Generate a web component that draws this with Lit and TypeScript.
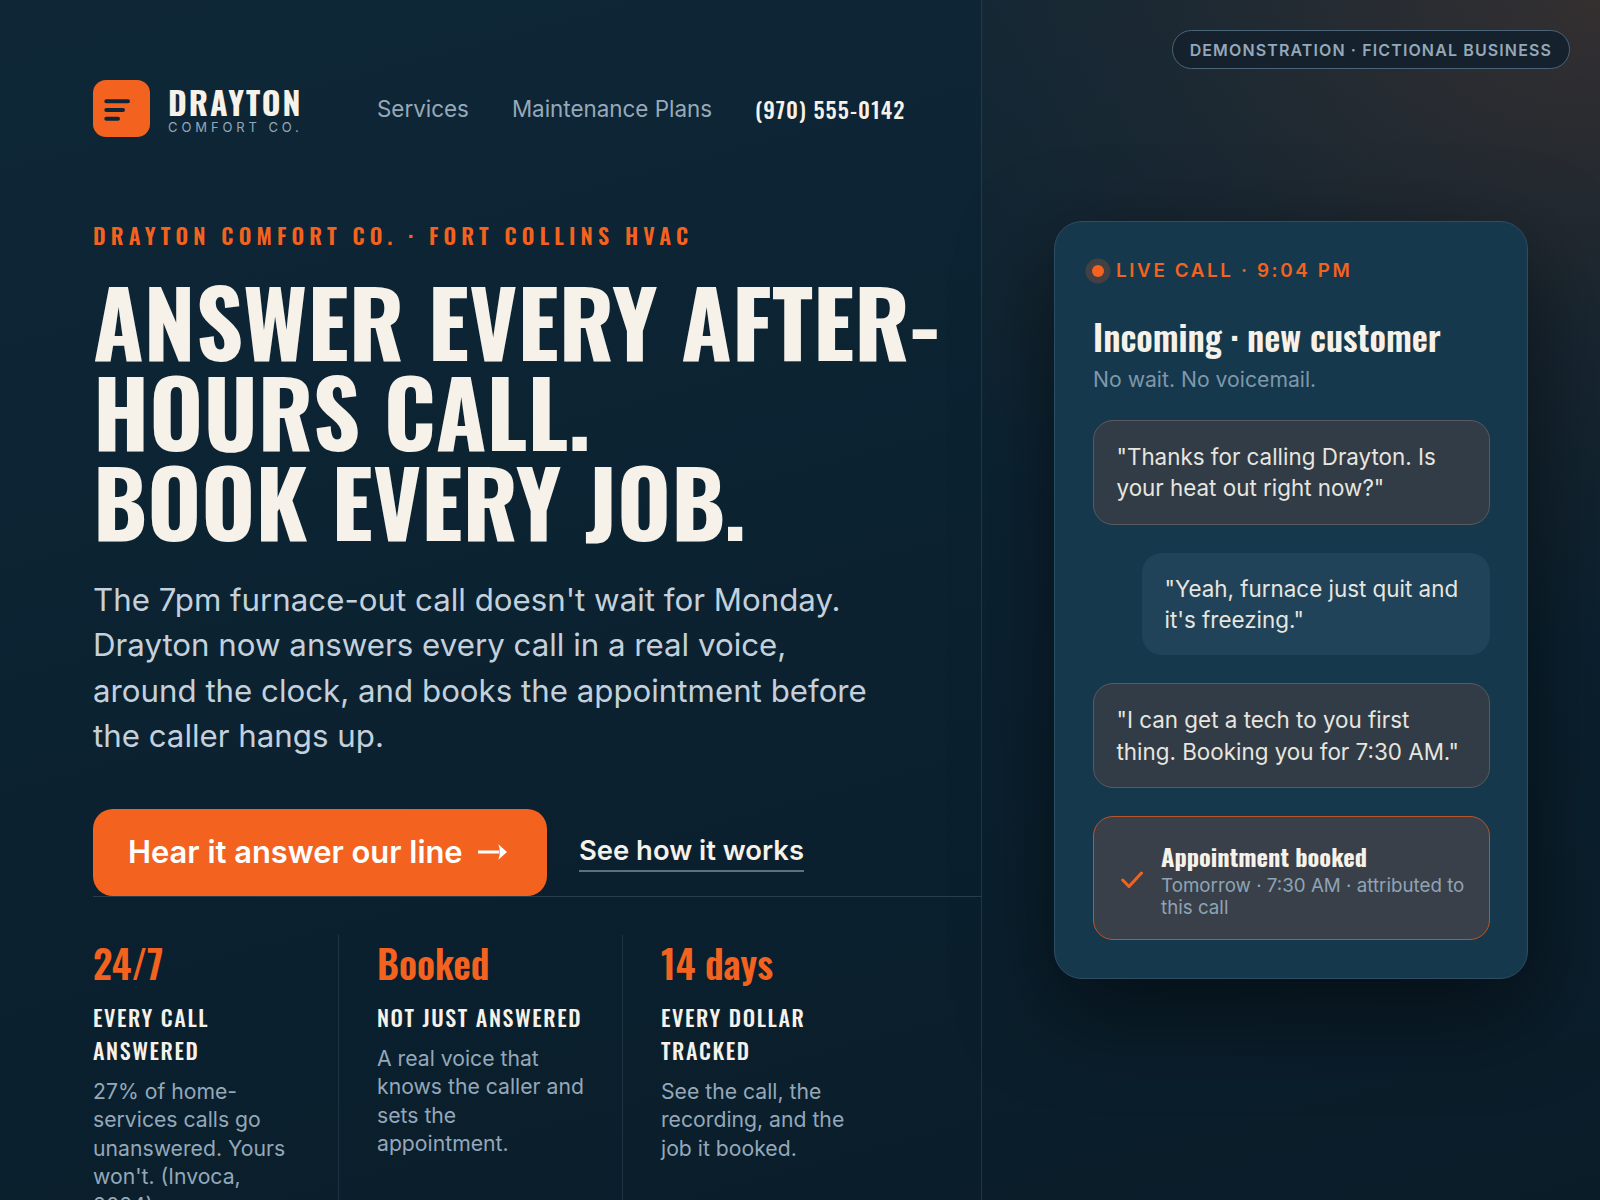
import { LitElement, html, css } from "lit";
import { customElement } from "lit/decorators.js";

const DISPLAY = css`Oswald, "Liberation Sans Narrow", "Liberation Sans", sans-serif`;
const BODY = css`Inter, "Liberation Sans", sans-serif`;

@customElement("app-root")
export class AppRoot extends LitElement {
  static styles = css`
    :host {
      display: block;
      height: 1200px;
      overflow: hidden;
      font-family: ${BODY};
      color: #f6f1e9;
      background: #0c2130;
    }
    * { box-sizing: border-box; }
    .page {
      position: relative;
      display: grid;
      grid-template-columns: 982px 618px;
      height: 1200px;
      overflow: hidden;
      background: linear-gradient(165deg, #0e2737 0%, #0b2130 55%, #0a1c28 100%);
    }
    .left {
      border-right: 1px solid rgba(150, 175, 195, 0.16);
      padding: 80px 0 0 93px;
      display: flex;
      flex-direction: column;
      min-width: 0;
    }
    header { display: flex; align-items: center; height: 58px; }
    .mark {
      width: 57px; height: 57px; border-radius: 13px; align-self: flex-start;
      background: #f3631f; margin-right: 18px; flex: none; display: block;
    }
    .brand { display: flex; flex-direction: column; width: 133px; margin: -1px 76px 0 0; }
    .brand b {
      font: 700 32px/36px ${DISPLAY};
      letter-spacing: 0.062em; color: #f6f1e9; white-space: nowrap;
    }
    .brand small {
      font: 400 13px/14px ${BODY};
      letter-spacing: 0.3em; color: #94a8ba; white-space: nowrap;
    }
    nav { display: flex; align-items: center; gap: 43px; white-space: nowrap; }
    nav a { font: 400 22.4px/1.2 ${BODY}; color: #97a9b9; }
    nav a.tel { font: 500 22.4px/1.2 ${DISPLAY}; color: #f6f1e9; letter-spacing: 0.05em; }
    .eyebrow {
      margin-top: 83px;
      font: 600 22px/28px ${DISPLAY};
      letter-spacing: 0.235em; color: #f3631f; white-space: nowrap;
    }
    h1 {
      margin: 26px 0 0;
      font: 700 92.3px/90px ${DISPLAY};
      color: #f6f1e9; text-transform: uppercase;
    }
    .lede {
      margin: 33px 0 0; width: 790px;
      font: 400 31.25px/45.4px ${BODY}; color: #c4d0db;
    }
    .cta { display: flex; align-items: center; gap: 32px; margin-top: 49px; }
    .btn {
      display: flex; align-items: center; gap: 15px;
      height: 87px; width: 454px; padding: 0 35px;
      background: #f3631f; border-radius: 20px;
      font: 600 30.9px/1 ${BODY}; color: #fff; white-space: nowrap;
    }
    .link {
      font: 600 27.4px/33px ${BODY}; color: #f6f1e9; margin-top: 2px;
      border-bottom: 2px solid #5a7185; padding-bottom: 3.5px;
    }
    .stats {
      display: grid; grid-template-columns: 245px 284px 284px;
      border-top: 1px solid rgba(150, 175, 195, 0.22);
      padding-top: 38px;
      flex: 1;
    }
    .stat { padding-right: 30px; }
    .stat:first-child { padding-right: 39px; }
    .stat + .stat { border-left: 1px solid rgba(150, 175, 195, 0.14); padding-left: 38px; }
    .stat .v { font: 600 38.2px/56px ${DISPLAY}; color: #f3631f; }
    .stat .l {
      margin-top: 10px;
      font: 500 22px/33px ${DISPLAY}; letter-spacing: 0.073em; color: #f6f1e9; text-transform: uppercase;
    }
    .stat p { margin: 10px 0 0; font: 400 21.2px/28.6px ${BODY}; color: #94a8ba; }
    .right {
      position: relative; padding: 221px 72px 0 72px;
      background: radial-gradient(900px 650px at 100% 0%, rgba(246, 102, 31, 0.17), rgba(246, 102, 31, 0.06) 50%, rgba(246, 102, 31, 0.03) 70%, transparent 100%);
    }
    .badge {
      position: absolute; top: 30px; right: 30px;
      height: 39px; padding: 0 17px; border-radius: 20px;
      display: flex; align-items: center;
      background: #15212c; border: 1px solid #4b6478;
      font: 600 16px/1 ${BODY}; letter-spacing: 0.07em; color: #94a8ba; white-space: nowrap;
    }
    .card {
      width: 474px; border-radius: 28px;
      background: #16384c; border: 1px solid #2c4e64;
      padding: 37px 37px 38px 38px;
      box-shadow: 0 30px 90px rgba(0, 0, 0, 0.5);
    }
    .live {
      display: flex; align-items: center; gap: 12px; margin-left: -1px;
      font: 600 18.8px/24px ${BODY}; letter-spacing: 0.14em; color: #f3631f; white-space: nowrap;
    }
    .dot {
      width: 12px; height: 12px; border-radius: 50%; background: #f3631f;
      box-shadow: 0 0 0 6.5px rgba(246, 102, 31, 0.2);
    }
    h2 { margin: 28px 0 0; font: 600 35px/50px ${DISPLAY}; color: #f6f1e9; }
    .sub { margin: 2px 0 0; font: 400 21.2px/32px ${BODY}; color: #7e97aa; }
    .msg {
      margin-top: 28px; border-radius: 20px; padding: 20px 23px 20px 22.5px;
      font: 400 22.4px/31.36px ${BODY}; color: #e7e5df;
      background: #313c47; border: 1px solid #5a5a5e;
    }
    .sub + .msg { margin-top: 25px; }
    .msg.me { margin-left: 49px; background: #214359; border: none; }
    .booked {
      margin-top: 28px; display: flex; align-items: center; gap: 18px;
      background: #3a4049; border: 1px solid #b9552a; border-radius: 20px; padding: 23px 16px 19.5px 23px;
    }
    .booked svg { flex: none; }
    .booked b { display: block; font: 700 24.4px/32px ${DISPLAY}; color: #f6f1e9; }
    .booked span { display: block; margin-top: 2.5px; font: 400 18.75px/22.5px ${BODY}; color: #8ea4b6; }
  `;

  render() {
    return html`
      <div class="page">
        <section class="left">
          <header>
            <svg class="mark" viewBox="0 0 57 57" fill="none" stroke="#0e2538" stroke-width="4" stroke-linecap="round">
              <path d="M13.3 21.3H35M13.3 30H30M13.3 38.7H25" />
            </svg>
            <div class="brand"><b>DRAYTON</b><small>COMFORT CO.</small></div>
            <nav>
              <a>Services</a>
              <a>Maintenance Plans</a>
              <a class="tel">(970) 555-0142</a>
            </nav>
          </header>
          <div class="eyebrow">DRAYTON COMFORT CO. · FORT COLLINS HVAC</div>
          <h1>Answer every after-hours call.<br />Book every job.</h1>
          <p class="lede">The 7pm furnace-out call doesn't wait for Monday. Drayton now answers every call in a real voice, around the clock, and books the appointment before the caller hangs up.</p>
          <div class="cta">
            <a class="btn">Hear it answer our line
              <svg width="29" height="16" viewBox="0 0 30 16" fill="#fff"><path d="M0 6.5h22V8v1.5H0zM21 0l9 8-9 8c1-3 1.6-5.5 1.6-8S22 3 21 0z" /></svg>
            </a>
            <a class="link">See how it works</a>
          </div>
          <div class="stats">
            <div class="stat"><div class="v">24/7</div><div class="l">Every call answered</div><p>27% of home-services calls go unanswered. Yours won't. (Invoca, 2024)</p></div>
            <div class="stat"><div class="v">Booked</div><div class="l">Not just answered</div><p>A real voice that knows the caller and sets the appointment.</p></div>
            <div class="stat"><div class="v">14 days</div><div class="l">Every dollar tracked</div><p>See the call, the recording, and the job it booked.</p></div>
          </div>
        </section>
        <section class="right">
          <div class="badge">DEMONSTRATION · FICTIONAL BUSINESS</div>
          <div class="card">
            <div class="live"><i class="dot"></i>LIVE CALL · 9:04 PM</div>
            <h2>Incoming · new customer</h2>
            <p class="sub">No wait. No voicemail.</p>
            <div class="msg">"Thanks for calling Drayton. Is your heat out right now?"</div>
            <div class="msg me">"Yeah, furnace just quit and it's freezing."</div>
            <div class="msg">"I can get a tech to you first thing. Booking you for 7:30 AM."</div>
            <div class="booked">
              <svg width="26" height="26" viewBox="0 0 26 26" fill="none" stroke="#f3631f" stroke-width="3" stroke-linecap="round" stroke-linejoin="round"><path d="M5.7 13l6.3 6.5L24.5 6" /></svg>
              <div><b>Appointment booked</b><span>Tomorrow · 7:30 AM · attributed to this call</span></div>
            </div>
          </div>
        </section>
      </div>
    `;
  }
}
